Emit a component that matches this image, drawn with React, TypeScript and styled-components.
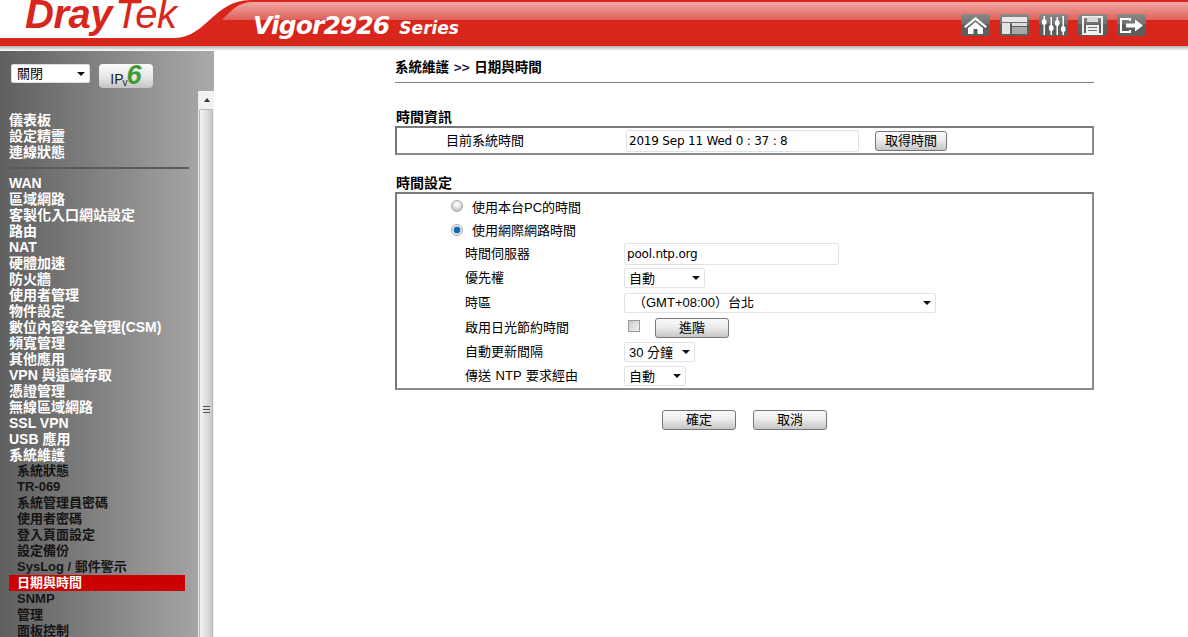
import React from "react";
import styled, { createGlobalStyle } from "styled-components";

const CJK = `"Liberation Sans", "Noto Sans CJK TC", sans-serif`;

const GlobalStyle = createGlobalStyle`
  html, body {
    margin: 0;
    padding: 0;
    height: 100%;
    overflow: hidden;
    background: #fff;
    font-family: ${CJK};
    color: #000;
  }
  * { box-sizing: border-box; }
`;

const Page = styled.div`
  width: 1188px;
  height: 637px;
  display: flex;
  flex-direction: column;
  overflow: hidden;
`;

const Header = styled.header`
  position: relative;
  flex: 0 0 51px;
  height: 51px;
  display: flex;
  align-items: flex-start;
  overflow: hidden;
  background: #fff;
`;

const HeaderArt = styled.svg`
  position: absolute;
  left: 0;
  top: 0;
`;

const Logo = styled.div`
  position: relative;
  margin-left: 25px;
  width: 228px;
  font: italic bold 40px/28px "Liberation Sans", sans-serif;
  color: #d9261c;
  letter-spacing: -0.5px;
  span { font-weight: normal; margin-left: 3px; }
`;

const Model = styled.div`
  position: relative;
  margin-top: 9px;
  font: italic bold 25px/34px "DejaVu Sans", sans-serif;
  color: #fff;
  letter-spacing: -0.9px;
  small {
    font-size: 17px;
    margin-left: 10px;
    letter-spacing: 0;
  }
`;

const Toolbar = styled.nav`
  position: relative;
  margin: 14px 42px 0 auto;
  display: flex;
  gap: 10px;
`;

const ToolButton = styled.button`
  width: 29px;
  height: 22px;
  padding: 0;
  border: 0;
  border-radius: 3px;
  background: linear-gradient(#8a8a8a 0, #6f6f6f 45%, #5b5b5b 50%, #5f5f5f 100%);
  display: flex;
  align-items: center;
  justify-content: center;
`;

const Body = styled.div`
  flex: 1;
  display: flex;
  min-height: 0;
`;

const Sidebar = styled.aside`
  flex: 0 0 214px;
  display: flex;
  flex-direction: column;
  background: linear-gradient(90deg, #5f5f5f 0, #aaaaaa 100%);
  min-height: 0;
`;

const SideTop = styled.div`
  flex: 0 0 40px;
  display: flex;
  gap: 9px;
  padding: 13px 0 0 11px;
  align-items: flex-start;
`;

const Ipv6Button = styled.button`
  width: 54px;
  height: 24px;
  padding: 0;
  border: 0;
  border-radius: 4px;
  background: linear-gradient(#fbfbfb, #e6e6e6 55%, #c4c4c4);
  display: flex;
  align-items: baseline;
  justify-content: center;
  font: 14px/22px "Liberation Sans", sans-serif;
  color: #222;
  sub { font-size: 10px; line-height: 0; vertical-align: baseline; margin: 0 0 0 -1px; transform: translateY(2px); }
  b {
    font: italic bold 27px/22px "Liberation Sans", sans-serif;
    color: #3f9b35;
    margin-left: -1px;
  }
`;

const SideScroll = styled.div`
  flex: 1;
  display: flex;
  min-height: 0;
`;

const Menu = styled.ul`
  flex: 0 0 198px;
  list-style: none;
  margin: 0;
  padding: 21px 13px 0 9px;
  overflow: hidden;
`;

const MenuItem = styled.li<{ $sub?: boolean; $active?: boolean }>`
  height: 16px;
  font-weight: bold;
  white-space: nowrap;
  font-size: ${p => (p.$sub ? "13px" : "14px")};
  line-height: 16px;
  color: ${p => (p.$sub && !p.$active ? "#151515" : "#fff")};
  padding-left: ${p => (p.$sub ? "8px" : "0")};
  background: ${p => (p.$active ? "#cc0000" : "transparent")};
  width: ${p => (p.$active ? "176px" : "auto")};
`;

const MenuRule = styled.li`
  height: 2px;
  margin: 7px -4px 6px 0;
  background: #5a5a5a;
`;

const ScrollBar = styled.div`
  flex: 0 0 16px;
  display: flex;
  flex-direction: column;
  background: #f0f0f0;
  border-left: 1px solid #e8e8e8;
`;

const ScrollUp = styled.div`
  flex: 0 0 18px;
  display: flex;
  align-items: center;
  justify-content: center;
  background: #f2f2f2;
  &::before {
    content: "";
    border: 3px solid transparent;
    border-top: 0;
    border-bottom: 4px solid #333;
  }
`;

const ScrollThumb = styled.div`
  flex: 1;
  margin-right: 1px;
  border-radius: 2px 2px 0 0;
  border: 1px solid #b5b5b5;
  border-bottom: 0;
  background: linear-gradient(90deg, #f4f4f4, #dcdcdc 60%, #c8c8c8);
  display: flex;
  justify-content: center;
  padding-top: 296px;
  &::before {
    content: "";
    width: 7px;
    height: 8px;
    background: repeating-linear-gradient(#555 0 1px, transparent 1px 3px);
  }
`;

const Main = styled.main`
  flex: 1;
  padding: 0 94px 0 181px;
`;

const Crumb = styled.h1`
  margin: 0;
  height: 32px;
  padding-top: 9px;
  font-size: 13.5px;
  line-height: 16px;
  font-weight: bold;
  word-spacing: 1px;
  border-bottom: 1px solid #808080;
  em { font-style: normal; color: #1a1a4a; }
`;

const SectionTitle = styled.h2<{ $top: number }>`
  margin: ${p => p.$top}px 0 0 1px;
  height: 16px;
  font-size: 14px;
  line-height: 16px;
  font-weight: bold;
`;

const Panel = styled.section`
  margin-top: 1px;
  border: 2px solid #7a7a7a;
  border-right-color: #8c8c8c;
  border-bottom-color: #8c8c8c;
`;

const Row = styled.div<{ $h: number; $col?: number; $pad?: number }>`
  height: ${p => p.$h}px;
  display: grid;
  grid-template-columns: ${p => p.$col ?? 159}px 1fr;
  align-items: center;
  padding-left: ${p => p.$pad ?? 68}px;
  font-size: 13px;
  word-spacing: 1px;
`;

const RadioRow = styled.label<{ $h: number }>`
  height: ${p => p.$h}px;
  display: flex;
  align-items: center;
  gap: 9px;
  padding-left: 54px;
  font-size: 13px;
`;

const Radio = styled.span<{ $on?: boolean }>`
  width: 12px;
  height: 12px;
  border-radius: 50%;
  border: 1px solid #a9a9a9;
  background: ${p =>
    p.$on
      ? "radial-gradient(circle at 50% 50%, #0a6db5 0 3px, #bcd3e4 3.5px, #f0f0f0 5px)"
      : "radial-gradient(circle at 50% 35%, #f4f4f4 0 2px, #c4c4c4 6px)"};
`;

const Label = styled.span`
  line-height: 16px;
`;

const Controls = styled.div`
  display: flex;
  align-items: center;
`;

const TextBox = styled.input<{ $w: number }>`
  width: ${p => p.$w}px;
  height: 22px;
  padding: 0 2px;
  border: 1px solid #e0e3ea;
  border-radius: 2px;
  background: #fff;
  font: 12px "DejaVu Sans", sans-serif;
  letter-spacing: -0.2px;
  color: #000;
  outline: none;
`;

const SelectWrap = styled.div<{ $w: number; $h?: number }>`
  position: relative;
  width: ${p => p.$w}px;
  height: ${p => p.$h ?? 20}px;
  &::after {
    content: "";
    position: absolute;
    right: 5px;
    top: 50%;
    margin-top: -2px;
    border: 4px solid transparent;
    border-bottom: 0;
    border-top: 4px solid #111;
    pointer-events: none;
  }
`;

const Select = styled.select`
  appearance: none;
  width: 100%;
  height: 100%;
  padding: 0 0 0 4px;
  border: 1px solid #e0e3ea;
  border-radius: 2px;
  background: #fff;
  font: 13px ${CJK};
  color: #000;
  outline: none;
`;

const ZoneSelect = styled(Select)`
  padding-left: 8px;
`;

const Check = styled.span`
  width: 12px;
  height: 12px;
  margin: -4px 15px 0 4px;
  border: 1px solid #9a9a9a;
  background: linear-gradient(135deg, #c9c9c9, #f2f2f2);
`;

const Btn = styled.button<{ $ml?: number }>`
  width: ${p => (p.$ml === 16 ? 72 : 74)}px;
  height: 20px;
  margin-left: ${p => p.$ml ?? 0}px;
  padding: 0;
  border: 1px solid #777;
  border-radius: 3px;
  background: linear-gradient(#fafafa 0, #ececec 45%, #c6c6c6 100%);
  font: 13px/18px ${CJK};
  color: #000;
`;

const Actions = styled.div`
  display: flex;
  justify-content: center;
  gap: 17px;
  margin-top: 20px;
`;

const SideSelect = styled(Select)`
  padding-left: 5px;
  border-color: #ddd;
`;

const mainMenu = ["WAN", "區域網路", "客製化入口網站設定", "路由", "NAT", "硬體加速", "防火牆", "使用者管理", "物件設定",
  "數位內容安全管理(CSM)", "頻寬管理", "其他應用", "VPN 與遠端存取", "憑證管理", "無線區域網路", "SSL VPN", "USB 應用", "系統維護"];
const subMenu = ["系統狀態", "TR-069", "系統管理員密碼", "使用者密碼", "登入頁面設定", "設定備份", "SysLog / 郵件警示",
  "日期與時間", "SNMP", "管理", "面板控制"];

const HeaderBackground = () => (
  <HeaderArt width="1188" height="51" viewBox="0 0 1188 51">
    <defs>
      <linearGradient id="shine" x1="0" y1="0" x2="0" y2="1">
        <stop offset="0" stopColor="#efa8a2" />
        <stop offset="1" stopColor="#e0605a" />
      </linearGradient>
      <linearGradient id="fade" x1="0" y1="0" x2="0" y2="1">
        <stop offset="0" stopColor="#b0b0b0" />
        <stop offset="1" stopColor="#ffffff" />
      </linearGradient>
    </defs>
    <rect y="46" width="1188" height="5" fill="url(#fade)" />
    <path d="M0 38H175C205 38 215 0 250 0H1188V46H0Z" fill="#d9261c" />
    <path d="M222 20C232 10 238 2 254 2H1188V20Z" fill="url(#shine)" />
  </HeaderArt>
);

const HomeIcon = () => (
  <svg width="25" height="19" viewBox="0 0 25 19">
    <path d="M12.5 1L1 10.5 2.5 12 12.5 4 22.5 12 24 10.5Z" fill="#fff" />
    <path d="M5 12L12.5 6 20 12V18H14.5V13H10.5V18H5Z" fill="#fff" />
  </svg>
);

const PanelIcon = () => (
  <svg width="25" height="18" viewBox="0 0 25 18">
    <rect x="0" y="1" width="25" height="5" fill="#e8e8e8" />
    <rect x="0" y="7" width="8" height="11" fill="#e4e4e4" />
    <rect x="10" y="7" width="15" height="3" fill="#ddd" />
    <rect x="10" y="11" width="15" height="7" fill="#a8a8a8" />
  </svg>
);

const SlidersIcon = () => (
  <svg width="25" height="19" viewBox="0 0 25 19" fill="#fff">
    <rect x="2.5" y="0" width="1.5" height="19" />
    <rect x="9.5" y="1" width="1.5" height="18" />
    <rect x="15.5" y="1" width="1.5" height="18" />
    <rect x="21.5" y="0" width="1.5" height="19" />
    <ellipse cx="3.2" cy="6" rx="2.4" ry="3" />
    <ellipse cx="10.2" cy="12" rx="2.4" ry="3" />
    <ellipse cx="16.2" cy="7" rx="2.4" ry="3" />
    <ellipse cx="22.2" cy="13" rx="2.4" ry="3" />
  </svg>
);

const SaveIcon = () => (
  <svg width="21" height="19" viewBox="0 0 21 19">
    <path d="M1 1H20V18H1Z" fill="none" stroke="#eee" strokeWidth="2" />
    <rect x="5" y="1" width="11" height="5" fill="#d8d8d8" />
    <rect x="4" y="9" width="13" height="8" fill="#efefef" />
    <rect x="6" y="11" width="9" height="1" fill="#777" />
    <rect x="6" y="14" width="9" height="1" fill="#777" />
  </svg>
);

const LogoutIcon = () => (
  <svg width="25" height="17" viewBox="0 0 25 17">
    <path d="M11 4V2H2V15H11V13" fill="none" stroke="#fff" strokeWidth="2" />
    <path d="M7 6.5H16V2.5L24 8.5 16 14.5V10.5H7Z" fill="#fff" />
  </svg>
);

export default function App() {
  return (
    <Page>
      <GlobalStyle />
      <Header>
        <HeaderBackground />
        <Logo>Dray<span>Tek</span></Logo>
        <Model>Vigor2926<small>Series</small></Model>
        <Toolbar>
          <ToolButton><HomeIcon /></ToolButton>
          <ToolButton><PanelIcon /></ToolButton>
          <ToolButton><SlidersIcon /></ToolButton>
          <ToolButton><SaveIcon /></ToolButton>
          <ToolButton><LogoutIcon /></ToolButton>
        </Toolbar>
      </Header>
      <Body>
        <Sidebar>
          <SideTop>
            <SelectWrap $w={79} $h={19}>
              <SideSelect defaultValue="off"><option value="off">關閉</option></SideSelect>
            </SelectWrap>
            <Ipv6Button>IP<sub>v</sub><b>6</b></Ipv6Button>
          </SideTop>
          <SideScroll>
            <Menu>
              <MenuItem>儀表板</MenuItem>
              <MenuItem>設定精靈</MenuItem>
              <MenuItem>連線狀態</MenuItem>
              <MenuRule />
              {mainMenu.map(m => <MenuItem key={m}>{m}</MenuItem>)}
              {subMenu.map(m => <MenuItem key={m} $sub $active={m === "日期與時間"}>{m}</MenuItem>)}
            </Menu>
            <ScrollBar>
              <ScrollUp />
              <ScrollThumb />
            </ScrollBar>
          </SideScroll>
        </Sidebar>
        <Main>
          <Crumb>系統維護 <em>&gt;&gt;</em> 日期與時間</Crumb>
          <SectionTitle $top={26}>時間資訊</SectionTitle>
          <Panel>
            <Row $h={25} $col={180} $pad={49}>
              <Label>目前系統時間</Label>
              <Controls>
                <TextBox $w={233} readOnly value="2019 Sep 11 Wed 0 : 37 : 8" />
                <Btn $ml={16}>取得時間</Btn>
              </Controls>
            </Row>
          </Panel>
          <SectionTitle $top={20}>時間設定</SectionTitle>
          <Panel>
            <RadioRow $h={24}><Radio />使用本台PC的時間</RadioRow>
            <RadioRow $h={23}><Radio $on />使用網際網路時間</RadioRow>
            <Row $h={25}>
              <Label>時間伺服器</Label>
              <Controls><TextBox $w={215} readOnly value="pool.ntp.org" /></Controls>
            </Row>
            <Row $h={24}>
              <Label>優先權</Label>
              <Controls>
                <SelectWrap $w={81}><Select defaultValue="auto"><option value="auto">自動</option></Select></SelectWrap>
              </Controls>
            </Row>
            <Row $h={25}>
              <Label>時區</Label>
              <Controls>
                <SelectWrap $w={312}><ZoneSelect defaultValue="tpe"><option value="tpe">（GMT+08:00）台北</option></ZoneSelect></SelectWrap>
              </Controls>
            </Row>
            <Row $h={25}>
              <Label>啟用日光節約時間</Label>
              <Controls><Check /><Btn>進階</Btn></Controls>
            </Row>
            <Row $h={24}>
              <Label>自動更新間隔</Label>
              <Controls>
                <SelectWrap $w={71}><Select defaultValue="30"><option value="30">30 分鐘</option></Select></SelectWrap>
              </Controls>
            </Row>
            <Row $h={24}>
              <Label>傳送 NTP 要求經由</Label>
              <Controls>
                <SelectWrap $w={62}><Select defaultValue="auto"><option value="auto">自動</option></Select></SelectWrap>
              </Controls>
            </Row>
          </Panel>
          <Actions>
            <Btn>確定</Btn>
            <Btn>取消</Btn>
          </Actions>
        </Main>
      </Body>
    </Page>
  );
}
